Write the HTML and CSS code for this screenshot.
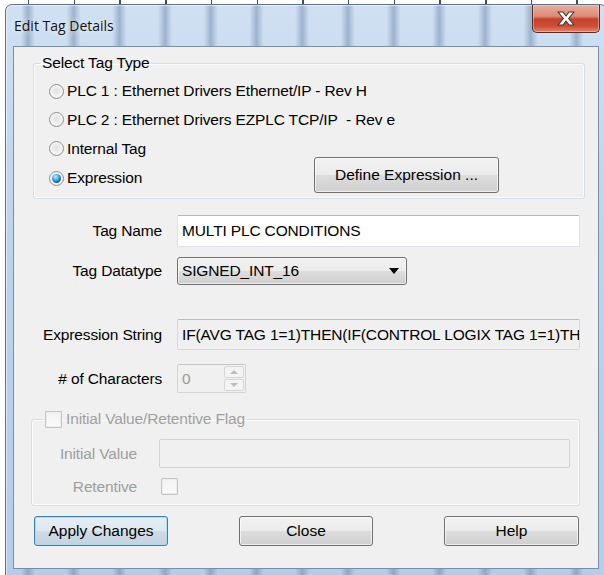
FILE: index.html
```html
<!DOCTYPE html>
<html lang="en">
<head>
<meta charset="utf-8">
<title>Edit Tag Details</title>
<link rel="stylesheet" href="styles.css">
</head>
<body>
<div class="window">
  <div class="titlebar">
    <span class="title">Edit Tag Details</span>
    <button class="close" type="button" aria-label="Close">
      <svg width="20" height="15" viewBox="0 0 20 15">
        <polygon points="2,1 7,1 10,5 13,1 18,1 12.6,7.5 18,14 13,14 10,10 7,14 2,14 7.4,7.5" fill="#fff" stroke="#4a302b" stroke-width="1.1" stroke-linejoin="round"/>
      </svg>
    </button>
  </div>

  <div class="client">
    <fieldset class="group type-group">
      <legend>Select Tag Type</legend>
      <label class="opt r1"><span class="radio"></span>PLC 1 : Ethernet Drivers Ethernet/IP - Rev H</label>
      <label class="opt r2"><span class="radio"></span>PLC 2 : Ethernet Drivers EZPLC TCP/IP&nbsp; - Rev e</label>
      <label class="opt r3"><span class="radio"></span>Internal Tag</label>
      <div class="opt r4">
        <label class="opt-inner"><span class="radio on"></span>Expression</label>
        <button class="btn define" type="button">Define Expression ...</button>
      </div>
    </fieldset>

    <div class="form">
      <div class="row row-name">
        <span class="lbl">Tag Name</span>
        <div class="field text wide">MULTI PLC CONDITIONS</div>
      </div>
      <div class="row row-type">
        <span class="lbl">Tag Datatype</span>
        <div class="field combo">SIGNED_INT_16<span class="caret"></span></div>
      </div>
      <div class="row row-expr">
        <span class="lbl">Expression String</span>
        <div class="field readonly wide">IF(AVG TAG 1=1)THEN(IF(CONTROL LOGIX TAG 1=1)TH</div>
      </div>
      <div class="row row-chars">
        <span class="lbl"># of Characters</span>
        <div class="field spin">
          <span class="spin-val">0</span>
          <span class="spin-btns">
            <span class="spin-btn"><span class="tri up"></span></span>
            <span class="spin-btn"><span class="tri down"></span></span>
          </span>
        </div>
      </div>
    </div>

    <fieldset class="group init-group">
      <legend><span class="check"></span>Initial Value/Retentive Flag</legend>
      <div class="irow irow-value">
        <span class="lbl dim">Initial Value</span>
        <div class="field disabled"></div>
      </div>
      <div class="irow irow-ret">
        <span class="lbl dim">Retentive</span>
        <span class="check box-ret"></span>
      </div>
    </fieldset>

    <div class="actions">
      <button class="btn default" type="button">Apply Changes</button>
      <button class="btn" type="button">Close</button>
      <button class="btn" type="button">Help</button>
    </div>
  </div>
</div>
</body>
</html>
```

FILE: styles.css
```css
html, body {
  margin: 0;
  height: 100%;
  overflow: hidden;
}

body {
  font-family: "Liberation Sans", Arial, sans-serif;
  font-size: 15.5px;
  letter-spacing: -0.15px;
  color: #000;
  background:
    repeating-linear-gradient(90deg, transparent 0 28px, #4a4a4a 28px 29.5px, transparent 29.5px 45.7px) 0 0 / 100% 4px no-repeat,
    #ffffff;
}

/* Aero glass frame */
.window {
  box-sizing: border-box;
  width: 602px;
  height: 580px;
  margin: 4px 0 0 5px;
  padding: 0 7px 7px 7px;
  border: 1px solid #5f7186;
  border-radius: 7px 7px 0 0;
  background:
    repeating-linear-gradient(90deg,
      rgba(70, 100, 140, 0) 0,
      rgba(70, 100, 140, 0) 15px,
      rgba(70, 100, 140, 0.36) 22px,
      rgba(70, 100, 140, 0) 29px,
      rgba(70, 100, 140, 0) 45.7px),
    linear-gradient(180deg, #cfe0f2 0%, #bcd3ec 40%, #b3cdea 100%);
  box-shadow: inset 0 0 0 1px rgba(255, 255, 255, 0.55);
}

.titlebar {
  height: 41px;
  display: flex;
  align-items: flex-start;
  justify-content: space-between;
}

.title {
  font-family: "Open Sans", "Noto Sans", sans-serif;
  font-size: 14px;
  letter-spacing: 0;
  color: #111;
  padding: 11px 0 0 1px;
  text-shadow: 0 0 6px rgba(255, 255, 255, 0.9);
}

.close {
  width: 68px;
  height: 28px;
  margin: 0 -1px 0 0;
  padding: 0;
  display: flex;
  align-items: center;
  justify-content: center;
  border: 1px solid #5a2a22;
  border-top: none;
  border-radius: 0 0 5px 5px;
  background: linear-gradient(180deg, #e8ad9f 0%, #dd8a74 42%, #c7402a 52%, #cc4e35 78%, #e0866d 100%);
  box-shadow: inset 0 0 0 1px rgba(255, 210, 200, 0.5);
}

/* Dialog body */
.client {
  box-sizing: border-box;
  height: 523px;
  border: 1px solid #7b8ea3;
  background: #f0f0f0;
  display: flex;
  flex-direction: column;
}

.group {
  margin: 0;
  border: 1px solid #d5dfe5;
  border-radius: 3px;
  box-shadow: inset 0 0 0 1px #fbfbfb;
  min-width: 0;
}

.group legend {
  line-height: 18px;
  padding: 0 2px;
}

.type-group {
  margin: 7px 13px 0 19px;
  padding: 5px 16px 5px 15px;
}

.type-group legend {
  margin-left: -9px;
}

.opt {
  display: flex;
  align-items: center;
  gap: 3px;
  height: 29px;
}

.opt.r1 { height: 28px; }
.opt.r4 { height: 30px; }

.opt-inner {
  display: flex;
  align-items: center;
  gap: 3px;
}

.radio {
  box-sizing: border-box;
  width: 15px;
  height: 15px;
  border-radius: 50%;
  border: 1px solid #8c8f92;
  background: radial-gradient(circle at 50% 45%, #e2e2e2 0, #eeeeee 45%, #f7f7f7 60%, #d6d6d6 100%);
  display: grid;
  place-items: center;
  flex: none;
}

.radio.on::after {
  content: "";
  width: 9px;
  height: 9px;
  border-radius: 50%;
  background: radial-gradient(circle at 40% 32%, #c9f2ff 0, #4db4ee 35%, #1a6db8 65%, #0d3d74 100%);
}

.btn {
  box-sizing: border-box;
  font: inherit;
  color: #000;
  border: 1px solid #707070;
  border-radius: 3px;
  background: linear-gradient(180deg, #f2f2f2 0%, #ebebeb 50%, #dddddd 51%, #cfcfcf 100%);
  box-shadow: inset 0 0 0 1px rgba(255, 255, 255, 0.65);
  padding: 0;
}

.btn.define {
  width: 185px;
  height: 36px;
  margin: -6px 69px 0 auto;
}

.btn.default {
  border-color: #3c7fb1;
  background: linear-gradient(180deg, #e6eef4 0%, #dde7ef 50%, #cfdbe5 51%, #c5d3df 100%);
  box-shadow: inset 0 0 0 1px #a9dcf6;
}

/* Labelled fields */
.form {
  padding: 16px 18px 0 0;
  display: flex;
  flex-direction: column;
}

.row {
  display: flex;
  align-items: center;
  gap: 15px;
}

.row .lbl {
  width: 148px;
  text-align: right;
  flex: none;
}

.row-name { height: 32px; }
.row-type { height: 28px; margin-top: 10px; }
.row-expr { height: 31px; margin-top: 34px; }
.row-chars { height: 29px; margin-top: 14px; }

.field {
  box-sizing: border-box;
  height: 100%;
  display: flex;
  align-items: center;
  padding: 0 4px;
  white-space: nowrap;
  overflow: hidden;
}

.field.wide { flex: 1; }

.field.text {
  background: #fff;
  border: 1px solid #dde2e8;
  border-top-color: #b4b8be;
  border-radius: 2px;
}

.field.readonly {
  background: #f0f0f0;
  border: 1px solid #d4d8dc;
  border-top-color: #b9bdc2;
  border-radius: 2px;
}

.field.combo {
  width: 230px;
  border: 1px solid #707070;
  border-radius: 3px;
  background: linear-gradient(180deg, #f2f2f2 0%, #ebebeb 50%, #dddddd 51%, #cfcfcf 100%);
  box-shadow: inset 0 0 0 1px rgba(255, 255, 255, 0.6);
  justify-content: space-between;
  padding-right: 7px;
}

.caret {
  width: 0;
  height: 0;
  border-left: 5px solid transparent;
  border-right: 5px solid transparent;
  border-top: 6px solid #000;
}

.field.spin {
  width: 69px;
  padding: 0 1px 0 4px;
  border: 1px solid #d2d5d9;
  border-top-color: #c3c6ca;
  border-radius: 2px;
  background: #f0f0f0;
  justify-content: space-between;
}

.spin-val {
  color: #9a9a9a;
}

.spin-btns {
  display: flex;
  flex-direction: column;
  width: 20px;
  height: 25px;
  gap: 1px;
}

.spin-btn {
  flex: 1;
  border: 1px solid #d6d6d6;
  border-radius: 2px;
  background: #f4f4f4;
  display: grid;
  place-items: center;
}

.tri {
  width: 0;
  height: 0;
  border-left: 4px solid transparent;
  border-right: 4px solid transparent;
}

.tri.up { border-bottom: 4px solid #bdbdbd; }
.tri.down { border-top: 4px solid #bdbdbd; }

/* Disabled initial value group */
.init-group {
  margin: 17px 18px 0 17px;
  padding: 11px 9px 10px 5px;
}

.init-group legend {
  display: flex;
  align-items: center;
  gap: 4px;
  margin-left: 7px;
  color: #a0a0a0;
  padding: 0 2px 0 1px;
}

.check {
  box-sizing: border-box;
  width: 17px;
  height: 17px;
  border: 1px solid #c4c4c4;
  border-radius: 1px;
  background: linear-gradient(180deg, #f2f2f2, #fbfbfb);
  box-shadow: inset 0 0 0 1px #ececec;
  flex: none;
}

.irow {
  display: flex;
  align-items: center;
  gap: 22px;
}

.irow .lbl {
  width: 100px;
  text-align: right;
  flex: none;
}

.lbl.dim { color: #9d9d9d; }

.irow-value { height: 29px; }
.irow-ret { height: 17px; margin-top: 10px; }

.box-ret { margin-left: 2px; }

.field.disabled {
  flex: 1;
  border: 1px solid #cfd2d6;
  border-radius: 2px;
  background: #f0f0f0;
}

/* Dialog buttons */
.actions {
  display: flex;
  justify-content: space-between;
  padding: 10px 19px 0 20px;
}

.actions .btn {
  width: 134px;
  height: 30px;
}

.actions .btn:last-child { width: 135px; }
```
